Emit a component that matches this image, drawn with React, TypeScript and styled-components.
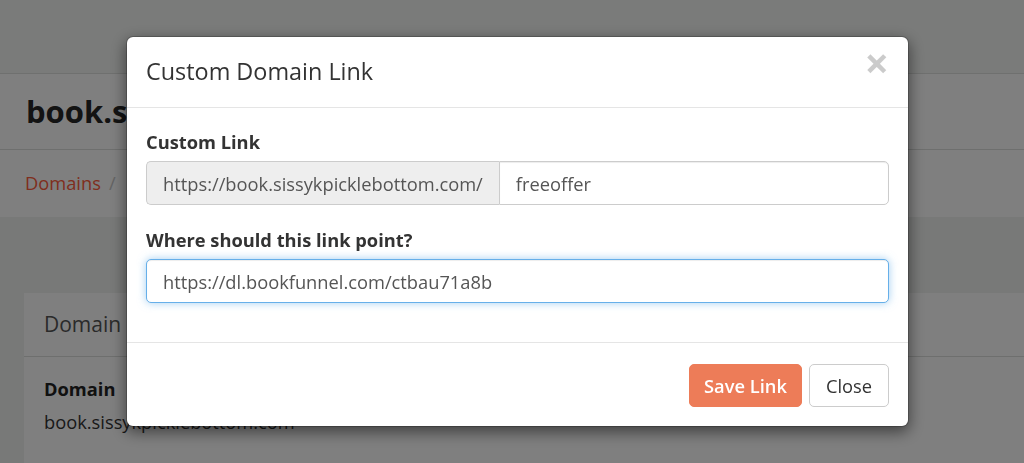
import React from "react";
import styled, { createGlobalStyle } from "styled-components";

const GlobalStyle = createGlobalStyle`
  * { box-sizing: border-box; }
  html, body { margin: 0; padding: 0; }
  body {
    font-family: "Open Sans", "Noto Sans", "Liberation Sans", sans-serif;
    font-size: 18.3px;
    color: #333;
    background: #f0f2f0;
    overflow: hidden;
  }
`;

const Page = styled.div`
  width: 1024px;
  height: 463px;
  display: flex;
  flex-direction: column;
  background: #f0f2f0;
`;

const Nav = styled.div`
  height: 74px;
  flex: none;
  background: #f4f6f4;
  border-bottom: 1px solid #dfe1df;
`;

const Header = styled.div`
  height: 76px;
  flex: none;
  background: #fff;
  border-bottom: 1px solid #dcdedc;
  display: flex;
  align-items: center;
  padding: 0 26px;
`;

const HeaderTitle = styled.h1`
  margin: 0;
  font-size: 31px;
  font-weight: 700;
  color: #262626;
  line-height: 1;
`;

const Breadcrumb = styled.div`
  height: 67px;
  flex: none;
  background: #fff;
  display: flex;
  align-items: center;
  gap: 8px;
  padding: 0 25px 2px;
  font-size: 18.3px;
`;

const Crumb = styled.span`
  color: #ff5d3c;
`;

const CrumbSep = styled.span`
  color: #c8c8c8;
`;

const Content = styled.div`
  flex: 1;
  padding: 76px 0 0 24px;
`;

const Panel = styled.div`
  background: #fff;
  height: 100%;
`;

const PanelHeading = styled.div`
  padding: 20px 20px;
  font-size: 21px;
  line-height: 23px;
  color: #555;
  border-bottom: 1px solid #dcdedc;
`;

const PanelBody = styled.div`
  padding: 19px 20px;
  line-height: 26px;
`;

const FieldName = styled.div`
  font-weight: 700;
  color: #222;
  margin-bottom: 7px;
`;

const FieldValue = styled.div`
  color: #333;
`;

const Backdrop = styled.div`
  position: fixed;
  inset: 0;
  background: rgba(0, 0, 0, 0.5);
`;

const Modal = styled.div`
  position: fixed;
  left: 126px;
  top: 36px;
  width: 783px;
  background: #fff;
  border: 1px solid rgba(0, 0, 0, 0.2);
  border-radius: 7px;
  box-shadow: 0 5px 15px rgba(0, 0, 0, 0.5);
  background-clip: padding-box;
`;

const ModalHeader = styled.div`
  display: flex;
  justify-content: space-between;
  align-items: flex-start;
  height: 71px;
  padding: 18px 19px 0 19px;
  border-bottom: 1px solid #e5e5e5;
`;

const ModalTitle = styled.h4`
  margin: 0;
  font-size: 23.4px;
  line-height: 33px;
  font-weight: 400;
  color: #333;
`;

const CloseX = styled.button`
  border: 0;
  background: transparent;
  padding: 0;
  margin-top: -14px;
  margin-right: 0;
  font-family: "Open Sans", "Liberation Sans", sans-serif;
  font-size: 43px;
  font-weight: 700;
  line-height: 1;
  color: #000;
  opacity: 0.2;
  cursor: pointer;
`;

const ModalBody = styled.div`
  padding: 21px 19px 17px 19px;
`;

const FormGroup = styled.div`
  margin-bottom: 22px;
`;

const Label = styled.label`
  display: block;
  font-weight: 700;
  color: #333;
  line-height: 25px;
  margin-bottom: 7px;
`;

const InputGroup = styled.div`
  display: flex;
  width: 100%;
`;

const Addon = styled.span`
  flex: none;
  height: 44px;
  display: flex;
  align-items: center;
  padding: 0 16px;
  background: #eee;
  color: #555;
  border: 1px solid #ccc;
  border-right: 0;
  border-radius: 5px 0 0 5px;
  white-space: nowrap;
`;

const Input = styled.input<{ $joined?: boolean; $focused?: boolean }>`
  flex: 1;
  min-width: 0;
  width: 100%;
  height: 44px;
  padding: 0 16px;
  font-family: inherit;
  font-size: 18.3px;
  color: #555;
  background: #fff;
  border: 1px solid ${(p) => (p.$focused ? "#66afe9" : "#ccc")};
  border-radius: ${(p) => (p.$joined ? "0 5px 5px 0" : "5px")};
  box-shadow: ${(p) =>
    p.$focused
      ? "inset 0 1px 1px rgba(0,0,0,.075), 0 0 8px rgba(102,175,233,.6)"
      : "inset 0 1px 1px rgba(0,0,0,.075)"};
  outline: none;
`;

const ModalFooter = styled.div`
  display: flex;
  justify-content: flex-end;
  gap: 7px;
  padding: 21px 19px 19px 19px;
  border-top: 1px solid #e5e5e5;
`;

const Button = styled.button<{ $primary?: boolean }>`
  height: 43px;
  padding: 0 ${(p) => (p.$primary ? 14 : 16)}px;
  font-family: inherit;
  font-size: 18.3px;
  font-weight: ${(p) => (p.$primary ? 600 : 400)};
  border-radius: 5px;
  border: 1px solid ${(p) => (p.$primary ? "#ed7c58" : "#ccc")};
  background: ${(p) => (p.$primary ? "#ed7c58" : "#fff")};
  color: ${(p) => (p.$primary ? "#fff" : "#333")};
  cursor: pointer;
`;

export default function App() {
  return (
    <>
      <GlobalStyle />
      <Page>
        <Nav />
        <Header>
          <HeaderTitle>book.sissykpicklebottom.com</HeaderTitle>
        </Header>
        <Breadcrumb>
          <Crumb>Domains</Crumb>
          <CrumbSep>/</CrumbSep>
        </Breadcrumb>
        <Content>
          <Panel>
            <PanelHeading>Domain Details</PanelHeading>
            <PanelBody>
              <FieldName>Domain</FieldName>
              <FieldValue>book.sissykpicklebottom.com</FieldValue>
            </PanelBody>
          </Panel>
        </Content>
      </Page>
      <Backdrop />
      <Modal>
        <ModalHeader>
          <ModalTitle>Custom Domain Link</ModalTitle>
          <CloseX aria-label="Close">×</CloseX>
        </ModalHeader>
        <ModalBody>
          <FormGroup>
            <Label>Custom Link</Label>
            <InputGroup>
              <Addon>https://book.sissykpicklebottom.com/</Addon>
              <Input $joined defaultValue="freeoffer" />
            </InputGroup>
          </FormGroup>
          <FormGroup>
            <Label>Where should this link point?</Label>
            <Input $focused defaultValue="https://dl.bookfunnel.com/ctbau71a8b" />
          </FormGroup>
        </ModalBody>
        <ModalFooter>
          <Button $primary>Save Link</Button>
          <Button>Close</Button>
        </ModalFooter>
      </Modal>
    </>
  );
}
